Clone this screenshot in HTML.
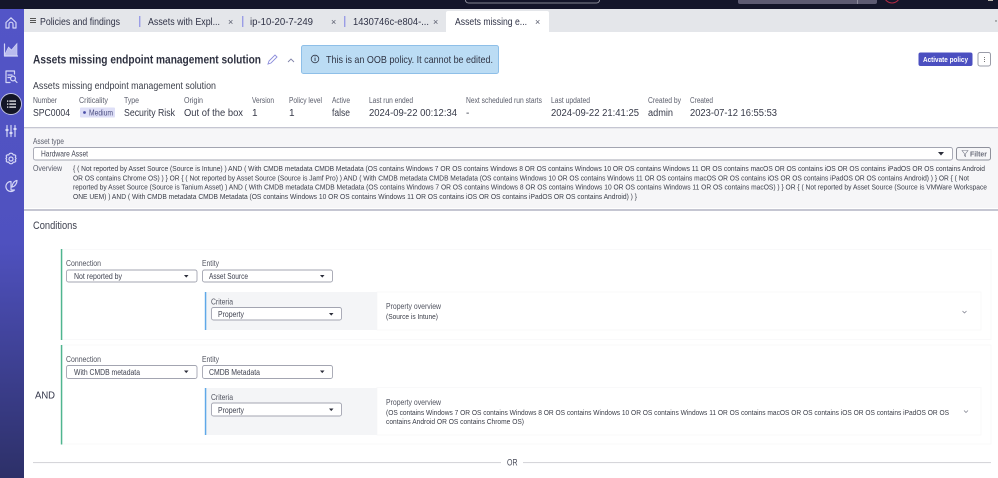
<!DOCTYPE html>
<html><head><meta charset="utf-8"><title>Assets missing endpoint management solution</title>
<style>
html,body{margin:0;padding:0;width:998px;height:478px;overflow:hidden;background:#fff}
svg{display:block;filter:blur(.35px)}
text{font-family:"Liberation Sans",sans-serif;fill:#3b3e4c;white-space:pre}
.tab{font-size:9.8px;fill:#2f3246}
.x{font-size:9px;fill:#55586a}
.lb{font-size:7.900px;fill:#5a5d6b}
.v{font-size:10px;fill:#363948}
.ov{font-size:7.700px;fill:#3a3d48}
.f{font-size:8.400px;fill:#50535f}
.s{font-size:8px;fill:#3f4250}
.ic{fill:none;stroke:#d3d5f6;stroke-width:1.2;stroke-linecap:round;stroke-linejoin:round}
.sel{fill:#fff;stroke:#a3a5b1;stroke-width:.9}
.ar{fill:#2b2d3a}
</style></head><body>
<svg width="998" height="478" viewBox="0 0 998 478" xmlns="http://www.w3.org/2000/svg">
<defs><linearGradient id="g" x1="0" y1="0" x2="0" y2="1"><stop offset="0" stop-color="#5355c7"/><stop offset=".5" stop-color="#4f51bf"/><stop offset="1" stop-color="#2d3068"/></linearGradient></defs>
<rect width="998" height="478" fill="#fff"/>
<!-- top bar -->
<rect width="998" height="9" fill="#14162a"/>
<rect x="465.500" y="-4" width="134" height="7" rx="3" fill="none" stroke="#a9aab4" stroke-width=".8"/>
<rect x="738" y="-3" width="139" height="7" rx="2" fill="#5d5b72"/><rect x="857" y="0" width="1" height="4" fill="#8d8c9c"/>
<circle cx="892" cy="-5" r="8" fill="none" stroke="#b22a44" stroke-width="1"/>
<rect x="988" y="0" width="5" height="1" fill="#bdb9b0"/>
<!-- tab bar -->
<rect x="24" y="9" width="974" height="23" fill="#e4e6ea"/>
<path d="M446 32V13a2 2 0 0 1 2-2h99a2 2 0 0 1 2 2v19z" fill="#fff"/>
<rect x="30" y="18" width="6" height="1" fill="#555"/><rect x="30" y="20" width="6" height="1" fill="#555"/><rect x="30" y="22" width="6" height="1" fill="#555"/>
<text class="tab" x="40" y="25" textLength="80" lengthAdjust="spacingAndGlyphs">Policies and findings</text>
<rect x="139" y="16" width="1.400" height="11" fill="#9a9de6"/>
<text class="tab" x="148" y="25" textLength="72" lengthAdjust="spacingAndGlyphs">Assets with Expl...</text>
<text class="x" x="228" y="25">×</text>
<rect x="242" y="16" width="1.400" height="11" fill="#9a9de6"/>
<text class="tab" x="250" y="25" textLength="63" lengthAdjust="spacingAndGlyphs">ip-10-20-7-249</text>
<text class="x" x="331" y="25">×</text>
<rect x="344" y="16" width="1.400" height="11" fill="#9a9de6"/>
<text class="tab" x="353" y="25" textLength="76" lengthAdjust="spacingAndGlyphs">1430746c-e804-...</text>
<text class="x" x="433" y="25">×</text>
<text class="tab" x="455" y="25" textLength="72" lengthAdjust="spacingAndGlyphs">Assets missing e...</text>
<text class="x" x="535" y="25">×</text>
<circle cx="996" cy="21" r=".7" fill="#555"/>
<!-- header -->
<text x="33" y="63.500" font-size="11.800" font-weight="bold" style="fill:#2e3140" textLength="228" lengthAdjust="spacingAndGlyphs">Assets missing endpoint management solution</text>
<path d="M268 64l1-3 6-6 2 2-6 6z" fill="none" stroke="#8b8ddb" stroke-width=".9"/>
<path d="M288 62l3-3 3 3" fill="none" stroke="#7f82a8" stroke-width=".9"/>
<rect x="301.500" y="45.500" width="197" height="28" rx="2" fill="#bbdcf4" stroke="#8ebfe8"/>
<circle cx="315" cy="59" r="3.800" fill="none" stroke="#333a4a" stroke-width=".8"/><rect x="314.600" y="58" width=".9" height="3" fill="#333a4a"/><rect x="314.600" y="56.500" width=".9" height=".9" fill="#333a4a"/>
<text x="326" y="63" font-size="10.300" style="fill:#2f3444" textLength="167" lengthAdjust="spacingAndGlyphs">This is an OOB policy. It cannot be edited.</text>
<rect x="918.500" y="52.500" width="54" height="13.500" rx="2" fill="#4b4fc0"/>
<text x="923" y="62" font-size="7" font-weight="bold" style="fill:#fff" textLength="45" lengthAdjust="spacingAndGlyphs">Activate policy</text>
<rect x="978" y="52.500" width="12.500" height="13.500" rx="2" fill="#fff" stroke="#9a9ca8"/>
<rect x="984" y="57" width=".8" height="1" fill="#555"/><rect x="984" y="59" width=".8" height="1" fill="#555"/><rect x="984" y="61" width=".8" height="1" fill="#555"/>
<text x="33" y="89" font-size="9.800" style="fill:#3d404b" textLength="183" lengthAdjust="spacingAndGlyphs">Assets missing endpoint management solution</text>
<!-- meta -->
<text class="lb" x="33" y="103" textLength="24" lengthAdjust="spacingAndGlyphs">Number</text>
<text class="lb" x="79" y="103" textLength="29" lengthAdjust="spacingAndGlyphs">Criticality</text>
<text class="lb" x="124" y="103" textLength="15" lengthAdjust="spacingAndGlyphs">Type</text>
<text class="lb" x="184" y="103" textLength="19" lengthAdjust="spacingAndGlyphs">Origin</text>
<text class="lb" x="252" y="103" textLength="22" lengthAdjust="spacingAndGlyphs">Version</text>
<text class="lb" x="289" y="103" textLength="33" lengthAdjust="spacingAndGlyphs">Policy level</text>
<text class="lb" x="332" y="103" textLength="18" lengthAdjust="spacingAndGlyphs">Active</text>
<text class="lb" x="369" y="103" textLength="44" lengthAdjust="spacingAndGlyphs">Last run ended</text>
<text class="lb" x="466" y="103" textLength="76" lengthAdjust="spacingAndGlyphs">Next scheduled run starts</text>
<text class="lb" x="551" y="103" textLength="39" lengthAdjust="spacingAndGlyphs">Last updated</text>
<text class="lb" x="648" y="103" textLength="33" lengthAdjust="spacingAndGlyphs">Created by</text>
<text class="lb" x="690" y="103" textLength="23" lengthAdjust="spacingAndGlyphs">Created</text>
<text class="v" x="33" y="116" textLength="37" lengthAdjust="spacingAndGlyphs">SPC0004</text>
<rect x="80" y="107.500" width="35" height="10" rx="1" fill="#dedff7"/><circle cx="84.500" cy="112.500" r="1.400" fill="#4b4fa8"/>
<text x="89" y="115.500" font-size="7.800" style="fill:#4a4d80" textLength="24" lengthAdjust="spacingAndGlyphs">Medium</text>
<text class="v" x="124" y="116" textLength="51" lengthAdjust="spacingAndGlyphs">Security Risk</text>
<text class="v" x="184" y="116" textLength="59" lengthAdjust="spacingAndGlyphs">Out of the box</text>
<text class="v" x="252" y="116">1</text>
<text class="v" x="289" y="116">1</text>
<text class="v" x="332" y="116" textLength="18" lengthAdjust="spacingAndGlyphs">false</text>
<text class="v" x="369" y="116" textLength="88" lengthAdjust="spacingAndGlyphs">2024-09-22 00:12:34</text>
<text class="v" x="466" y="116">-</text>
<text class="v" x="551" y="116" textLength="88" lengthAdjust="spacingAndGlyphs">2024-09-22 21:41:25</text>
<text class="v" x="648" y="116" textLength="25" lengthAdjust="spacingAndGlyphs">admin</text>
<text class="v" x="690" y="116" textLength="87" lengthAdjust="spacingAndGlyphs">2023-07-12 16:55:53</text>
<!-- filter section -->
<rect x="24" y="128" width="974" height="80" fill="#f6f6f8"/>
<rect x="24" y="127" width="974" height="1.300" fill="#c5c6d2"/>
<rect x="24" y="209" width="974" height="2" fill="#c5c6d2"/>
<text class="lb" x="33" y="144" textLength="31" lengthAdjust="spacingAndGlyphs" style="font-size:8.300px">Asset type</text>
<rect class="sel" x="33.500" y="147.500" width="919" height="12.500" rx="2"/>
<text x="41" y="156.500" font-size="8.200" style="fill:#444755" textLength="47" lengthAdjust="spacingAndGlyphs">Hardware Asset</text>
<path class="ar" d="M938 152h6l-3 3.500z"/>
<rect x="956.500" y="147.500" width="34" height="12.500" rx="2" fill="#f6f6f8" stroke="#8f919c"/>
<path d="M962 150.500h6l-2.300 3v3l-1.400-.8v-2.200z" fill="none" stroke="#777a88" stroke-width=".6"/>
<text x="970" y="156.500" font-size="7.500" font-weight="bold" style="fill:#6a6d7a" textLength="17" lengthAdjust="spacingAndGlyphs">Filter</text>
<text class="lb" x="33" y="171" textLength="29" lengthAdjust="spacingAndGlyphs">Overview</text>
<text class="ov" x="73" y="171" textLength="912" lengthAdjust="spacingAndGlyphs">{ ( Not reported by Asset Source (Source is Intune) ) AND ( With CMDB metadata CMDB Metadata (OS contains Windows 7 OR OS contains Windows 8 OR OS contains Windows 10 OR OS contains Windows 11 OR OS contains macOS OR OS contains iOS OR OS contains iPadOS OR OS contains Android</text>
<text class="ov" x="73" y="180.300" textLength="896" lengthAdjust="spacingAndGlyphs">OR OS contains Chrome OS) ) } OR { ( Not reported by Asset Source (Source is Jamf Pro) ) AND ( With CMDB metadata CMDB Metadata (OS contains Windows 10 OR OS contains Windows 11 OR OS contains macOS OR OS contains iOS OR OS contains iPadOS OR OS contains Android) ) } OR { ( Not</text>
<text class="ov" x="73" y="189.600" textLength="914" lengthAdjust="spacingAndGlyphs">reported by Asset Source (Source is Tanium Asset) ) AND ( With CMDB metadata CMDB Metadata (OS contains Windows 7 OR OS contains Windows 8 OR OS contains Windows 10 OR OS contains Windows 11 OR OS contains macOS) ) } OR { ( Not reported by Asset Source (Source is VMWare Workspace</text>
<text class="ov" x="73" y="199" textLength="564" lengthAdjust="spacingAndGlyphs">ONE UEM) ) AND ( With CMDB metadata CMDB Metadata (OS contains Windows 10 OR OS contains Windows 11 OR OS contains iOS OR OS contains iPadOS OR OS contains Android) ) }</text>
<text x="33" y="229" font-size="10.800" style="fill:#3e414f" textLength="44" lengthAdjust="spacingAndGlyphs">Conditions</text>
<!-- card 1 -->
<rect x="61.500" y="249.500" width="929.500" height="90" fill="#fff" stroke="#f9f9fa"/>
<rect x="60.800" y="249" width="1.500" height="91" fill="#4fb58f"/>
<text class="f" x="66" y="266" textLength="35" lengthAdjust="spacingAndGlyphs">Connection</text>
<text class="f" x="202" y="266" textLength="17" lengthAdjust="spacingAndGlyphs">Entity</text>
<rect class="sel" x="66.500" y="270" width="130.500" height="12" rx="2"/>
<text class="s" x="74" y="278.800" textLength="48" lengthAdjust="spacingAndGlyphs">Not reported by</text>
<path class="ar" d="M184 275h4.500l-2.250 2.600z"/>
<rect class="sel" x="202.500" y="270" width="130" height="12" rx="2"/>
<text class="s" x="209" y="278.800" textLength="39" lengthAdjust="spacingAndGlyphs">Asset Source</text>
<path class="ar" d="M320 275h4.500l-2.250 2.600z"/>
<rect x="377" y="292" width="604" height="38" fill="#fff" stroke="#f9f9fa"/>
<rect x="205" y="292" width="172" height="38" fill="#f4f5f7"/><rect x="204.800" y="292" width="1.500" height="38" fill="#5fa8e8"/>
<text class="f" x="211" y="304.500" textLength="22" lengthAdjust="spacingAndGlyphs">Criteria</text>
<rect class="sel" x="211.500" y="307.500" width="130" height="12.500" rx="2"/>
<text class="s" x="218" y="316.800" textLength="26" lengthAdjust="spacingAndGlyphs">Property</text>
<path class="ar" d="M329 313h4.500l-2.250 2.600z"/>
<text class="f" x="386" y="309" textLength="55" lengthAdjust="spacingAndGlyphs" style="font-size:7.800px">Property overview</text>
<text class="ov" x="386" y="319" textLength="52" lengthAdjust="spacingAndGlyphs">(Source is Intune)</text>
<path d="M962.500 311l2 2 2-2" fill="none" stroke="#777a88" stroke-width=".7"/>
<!-- card 2 -->
<rect x="61.500" y="345" width="929.500" height="99" fill="#fff" stroke="#f9f9fa"/>
<rect x="60.800" y="345" width="1.500" height="99.500" fill="#4fb58f"/>
<text x="35" y="398.500" font-size="10.300" style="fill:#33364a" textLength="20" lengthAdjust="spacingAndGlyphs">AND</text>
<text class="f" x="66" y="362" textLength="35" lengthAdjust="spacingAndGlyphs">Connection</text>
<text class="f" x="202" y="362" textLength="17" lengthAdjust="spacingAndGlyphs">Entity</text>
<rect class="sel" x="66.500" y="365.500" width="130.500" height="13" rx="2"/>
<text class="s" x="74" y="374.800" textLength="66" lengthAdjust="spacingAndGlyphs">With CMDB metadata</text>
<path class="ar" d="M184 370.500h4.500l-2.250 2.600z"/>
<rect class="sel" x="202.500" y="365.500" width="130" height="13" rx="2"/>
<text class="s" x="209" y="374.800" textLength="51" lengthAdjust="spacingAndGlyphs">CMDB Metadata</text>
<path class="ar" d="M320 370.500h4.500l-2.250 2.600z"/>
<rect x="377" y="387.500" width="604" height="47.500" fill="#fff" stroke="#f9f9fa"/>
<rect x="205" y="388" width="172" height="47" fill="#f4f5f7"/><rect x="204.800" y="388" width="1.500" height="47" fill="#5fa8e8"/>
<text class="f" x="211" y="400" textLength="22" lengthAdjust="spacingAndGlyphs">Criteria</text>
<rect class="sel" x="211.500" y="403" width="130" height="13" rx="2"/>
<text class="s" x="218" y="412.800" textLength="26" lengthAdjust="spacingAndGlyphs">Property</text>
<path class="ar" d="M329 408.500h4.500l-2.250 2.600z"/>
<text class="f" x="386" y="405" textLength="55" lengthAdjust="spacingAndGlyphs" style="font-size:7.800px">Property overview</text>
<text class="ov" x="386" y="415" textLength="563" lengthAdjust="spacingAndGlyphs">(OS contains Windows 7 OR OS contains Windows 8 OR OS contains Windows 10 OR OS contains Windows 11 OR OS contains macOS OR OS contains iOS OR OS contains iPadOS OR OS</text>
<text class="ov" x="386" y="424" textLength="138" lengthAdjust="spacingAndGlyphs">contains Android OR OS contains Chrome OS)</text>
<path d="M964 410.500l2 2 2-2" fill="none" stroke="#777a88" stroke-width=".7"/>
<!-- OR divider -->
<rect x="33" y="462" width="468" height="1.100" fill="#d6d6da"/>
<text x="507" y="465.500" font-size="8.800" style="fill:#444755" textLength="10.500" lengthAdjust="spacingAndGlyphs">OR</text>
<rect x="523" y="462" width="468" height="1.100" fill="#d6d6da"/>
<!-- sidebar -->
<rect x="0" y="9" width="24" height="469" fill="url(#g)"/>
<path class="ic" d="M6 22.500l5-4.700 5 4.700v5.500h-3v-3.800a2 2 0 0 0-4 0v3.800H6z"/>
<path class="ic" d="M4.500 44v12h13"/>
<path d="M5 54l3.500-7 3 3 5.500-6.500V55.500H5z" fill="#b9bbee" stroke="#d3d5f6" stroke-width=".6"/>
<path class="ic" d="M14.500 71H6v11.500h4M14.500 71v3M8 75h4M8 77.500h2"/>
<circle class="ic" cx="13" cy="78.500" r="2.400"/><path class="ic" d="M14.800 80.300l2.200 2.200"/>
<circle cx="11" cy="104" r="10.500" fill="#131526" stroke="#c4c6e4" stroke-width=".9"/>
<rect x="7" y="100.500" width="1.300" height="1.200" fill="#fff"/><rect x="9.300" y="100.500" width="6.700" height="1.200" fill="#fff"/>
<rect x="7" y="103.500" width="1.300" height="1.200" fill="#fff"/><rect x="9.300" y="103.500" width="6.700" height="1.200" fill="#fff"/>
<rect x="7" y="106.500" width="1.300" height="1.200" fill="#fff"/><rect x="9.300" y="106.500" width="6.700" height="1.200" fill="#fff"/>
<path class="ic" d="M7 125.500v11M11 125.500v11M15 125.500v11" stroke-width="1.200"/>
<path d="M5.500 130h3M9.500 133h3M13.500 129h3" stroke="#e4e5fa" stroke-width="1.800" fill="none"/>
<circle class="ic" cx="11" cy="159" r="2"/>
<path class="ic" d="M11 153.200l1.500.4.800 1.300 1.500-.1 1 1.100-.5 1.400.8 1.200-.8 1.200.5 1.400-1 1.100-1.500-.1-.8 1.300-1.500.4-1.500-.4-.8-1.300-1.500.1-1-1.100.5-1.400-.8-1.200.8-1.200-.5-1.400 1-1.100 1.500.1.800-1.300z"/>
<path class="ic" d="M11 181.500a5 5 0 1 0 3.500 8.500h-3.500z"/>
<path class="ic" d="M12 187c0-3 2-6 5-6.500 0 3-2 6-5 6.500z"/>
</svg>
</body></html>
